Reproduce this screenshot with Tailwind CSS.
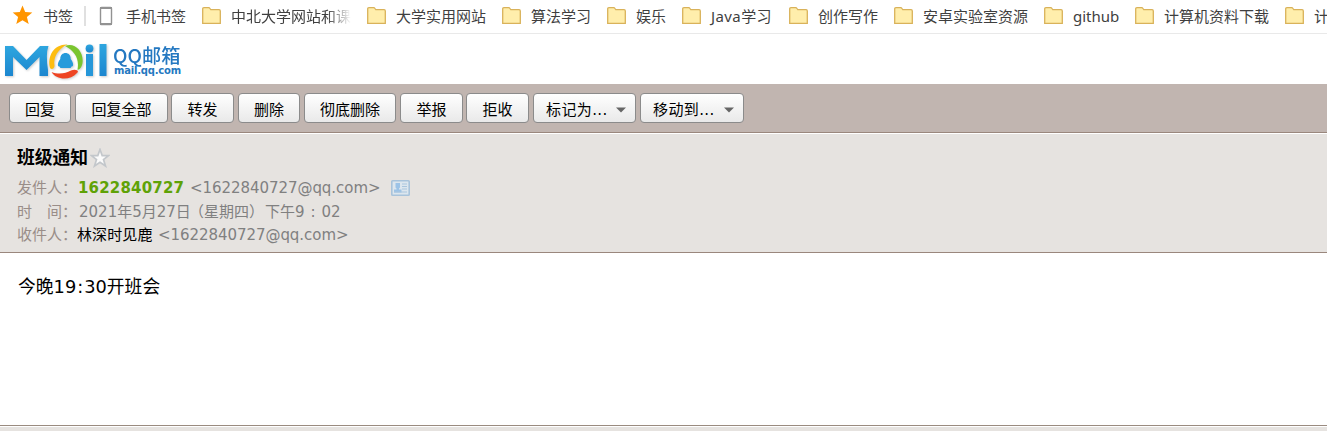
<!DOCTYPE html>
<html lang="zh-CN">
<head>
<meta charset="utf-8">
<title>QQ邮箱</title>
<script src="https://cdn.jsdelivr.net/npm/@tailwindcss/browser@4"></script>
</head>
<body class="w-[1327px] h-[431px] overflow-hidden bg-white flex flex-col font-['DejaVu_Sans','Noto_Sans_CJK_SC',sans-serif] text-[15px] text-black whitespace-nowrap">
<svg width="0" height="0" class="absolute">
  <defs>
    <linearGradient id="blue" x1="0" y1="0" x2="0" y2="1"><stop offset="0" stop-color="#2ea6df"/><stop offset="1" stop-color="#1c86cf"/></linearGradient>
    <symbol id="folder" viewBox="0 0 19 18"><path d="M.7 16.3V1.9Q.7.7 1.9.7H6.6Q7.5.7 8 1.5L8.8 2.7H17.1Q18.3 2.7 18.3 3.9V16.3Z" fill="#ffeeac" stroke="#d9b25a" stroke-width="1.3"/></symbol>
  </defs>
</svg>

<nav class="h-[34px] shrink-0 border-b border-[#e9e9e9] flex items-center overflow-hidden text-[#3f3f3f] font-['Noto_Sans','Noto_Sans_CJK_SC',sans-serif] leading-[30px] pb-[2px]">
  <div class="flex items-center w-[84px] shrink-0 pl-[12px] gap-[10px]">
    <svg class="w-[21px] h-[20px] shrink-0 -mt-px" viewBox="0 0 21 20"><path d="M10.500.500 13.200 7 20.300 7.500 14.900 12.100 16.700 19 10.500 15.300 4.300 19 6.100 12.100.7 7.500 7.800 7Z" fill="#ff9500"/></svg>
    <span>书签</span>
  </div>
  <div class="w-[2px] h-[20px] bg-[#e0e0e0] shrink-0"></div>
  <div class="flex items-center w-[116px] shrink-0 pl-[13px] gap-[13px]">
    <svg class="w-[14px] h-[20px] shrink-0 mt-px" viewBox="0 0 14 20"><rect x="1.500" y="1.500" width="11" height="17" rx="1" fill="#fff" stroke="#929292" stroke-width="1.400"/><path d="M1 2H13M1 18H13" stroke="#929292" stroke-width="2"/></svg>
    <span>手机书签</span>
  </div>
  <div class="flex items-center gap-[10px] w-[165px] shrink-0"><svg class="w-[19px] h-[18px] shrink-0"><use href="#folder"/></svg><span class="w-[120px] overflow-hidden [mask-image:linear-gradient(to_right,black_80%,transparent)]">中北大学网站和课</span></div>
  <div class="flex items-center gap-[10px] w-[135px] shrink-0"><svg class="w-[19px] h-[18px] shrink-0"><use href="#folder"/></svg><span>大学实用网站</span></div>
  <div class="flex items-center gap-[10px] w-[105px] shrink-0"><svg class="w-[19px] h-[18px] shrink-0"><use href="#folder"/></svg><span>算法学习</span></div>
  <div class="flex items-center gap-[10px] w-[75px] shrink-0"><svg class="w-[19px] h-[18px] shrink-0"><use href="#folder"/></svg><span>娱乐</span></div>
  <div class="flex items-center gap-[10px] w-[107px] shrink-0"><svg class="w-[19px] h-[18px] shrink-0"><use href="#folder"/></svg><span class="tracking-[0.4px]">Java学习</span></div>
  <div class="flex items-center gap-[10px] w-[105px] shrink-0"><svg class="w-[19px] h-[18px] shrink-0"><use href="#folder"/></svg><span>创作写作</span></div>
  <div class="flex items-center gap-[10px] w-[150px] shrink-0"><svg class="w-[19px] h-[18px] shrink-0"><use href="#folder"/></svg><span>安卓实验室资源</span></div>
  <div class="flex items-center gap-[10px] w-[91px] shrink-0"><svg class="w-[19px] h-[18px] shrink-0"><use href="#folder"/></svg><span>github</span></div>
  <div class="flex items-center gap-[10px] w-[150px] shrink-0"><svg class="w-[19px] h-[18px] shrink-0"><use href="#folder"/></svg><span>计算机资料下载</span></div>
  <div class="flex items-center gap-[10px] shrink-0"><svg class="w-[19px] h-[18px] shrink-0"><use href="#folder"/></svg><span>计</span></div>
</nav>

<header class="h-[50px] shrink-0 flex pl-[4px]">
  <svg class="w-[105px] h-[50px] shrink-0 drop-shadow-[1px_1px_1px_#0003]" viewBox="4 34 105 50">
    <path d="M5 76V46H13L26.500 60 40 46H48.500Q45.500 54 48 70V76H39.500V57L26.500 70 13 57V76Z" fill="url(#blue)"/>
    <path d="M50 68C47 56 54 44 67.500 44.500C58 49 53 57 54.500 66C54 69 51.500 70 50 68Z" fill="#fdbd10"/>
    <path d="M65 46C75 42 84 52 82.500 63C82 67 79 70.500 77.500 69.500C79.500 59 75 51 65 46Z" fill="#7ac52f"/>
    <path d="M51.500 72C58 74.500 65 74 71 70.500C75 68.500 80 70.500 77 73C70 81 56 80 51.500 72Z" fill="#ee4523"/>
    <path d="M60.300 59C60 51 71 51 70.700 59C73.500 62 74 67 71.500 66.500L70.500 68H60.500L59.500 66.500C57 67 57.500 62 60.300 59Z" fill="#269bdb"/>
    <circle cx="89.500" cy="48.500" r="3.900" fill="url(#blue)"/><path d="M86 54H93V76H86Z" fill="#2697d9"/>
    <path d="M99.500 44H106.500V76H99.500Z" fill="url(#blue)"/>
  </svg>
  <div class="ml-[4px] pt-[9px] text-[#2478c1] flex flex-col">
    <span class="text-[19px] leading-[24px] font-['Noto_Sans_CJK_SC',sans-serif] font-medium origin-left scale-x-[1.01]">QQ邮箱</span>
    <span class="text-[10px] leading-[8px] tracking-[-0.2px] font-bold ml-px">mail.qq.com</span>
  </div>
</header>

<div class="h-[49px] shrink-0 bg-[#c1b5b0] border-b border-[#9a877d] flex pt-[9px] pl-[9px] leading-[28px] text-[15px]">
  <button class="w-[62px] mr-[4px] h-[30px] border border-[#8b8b8b] rounded-[4px] bg-linear-to-b from-white to-[#e9e9e9] flex items-center justify-center pt-[3px]">回复</button>
  <button class="w-[93px] mr-[3px] h-[30px] border border-[#8b8b8b] rounded-[4px] bg-linear-to-b from-white to-[#e9e9e9] flex items-center justify-center pt-[3px]">回复全部</button>
  <button class="w-[63px] mr-[4px] h-[30px] border border-[#8b8b8b] rounded-[4px] bg-linear-to-b from-white to-[#e9e9e9] flex items-center justify-center pt-[3px]">转发</button>
  <button class="w-[62px] mr-[4px] h-[30px] border border-[#8b8b8b] rounded-[4px] bg-linear-to-b from-white to-[#e9e9e9] flex items-center justify-center pt-[3px]">删除</button>
  <button class="w-[92px] mr-[4px] h-[30px] border border-[#8b8b8b] rounded-[4px] bg-linear-to-b from-white to-[#e9e9e9] flex items-center justify-center pt-[3px]">彻底删除</button>
  <button class="w-[63px] mr-[3px] h-[30px] border border-[#8b8b8b] rounded-[4px] bg-linear-to-b from-white to-[#e9e9e9] flex items-center justify-center pt-[3px]">举报</button>
  <button class="w-[63px] mr-[4px] h-[30px] border border-[#8b8b8b] rounded-[4px] bg-linear-to-b from-white to-[#e9e9e9] flex items-center justify-center pt-[3px]">拒收</button>
  <button class="w-[103px] mr-[4px] h-[30px] border border-[#8b8b8b] rounded-[4px] bg-linear-to-b from-white to-[#e9e9e9] flex items-center justify-between pt-[3px] pl-[12px] pr-[9px]"><span class="tracking-[0.4px]">标记为...</span><svg class="w-[10px] h-[6px]" viewBox="0 0 10 6"><path d="M0 .5H10L5 5.500Z" fill="#666"/></svg></button>
  <button class="w-[104px] h-[30px] border border-[#8b8b8b] rounded-[4px] bg-linear-to-b from-white to-[#e9e9e9] flex items-center justify-between pt-[3px] pl-[12px] pr-[9px]"><span class="tracking-[0.4px]">移动到...</span><svg class="w-[10px] h-[6px]" viewBox="0 0 10 6"><path d="M0 .5H10L5 5.500Z" fill="#666"/></svg></button>
</div>

<section class="h-[120px] shrink-0 bg-[#e6e3e0] border-t border-t-white border-b border-b-[#9a877d] pl-[17px] pt-[12px] text-[#808080] flex flex-col">
  <div class="flex items-center h-[24px] mb-[6px] text-black">
    <h1 class="text-[17.800px] leading-[24px] font-bold">班级通知</h1>
    <svg class="w-[20px] h-[20px] ml-[2px] -mt-px" viewBox="0 0 20 20"><path d="M10 1.500 12.200 7.600H18.500L13.500 11.500 15.500 18 10 14.200 4.500 18 6.500 11.500 1.500 7.600H7.800Z" fill="#fbfbfb" stroke="#c3c7cb" stroke-width="1.700"/></svg>
  </div>
  <div class="flex items-center h-[24px] leading-[24px]">
    <span class="w-[61px] text-[#998d88]">发件人：</span>
    <span class="w-[112px] font-bold text-[#5fa207] tracking-[0.18px]">1622840727</span>
    <span class="w-[201px] tracking-[-0.05px]">&lt;1622840727@qq.com&gt;</span>
    <svg class="w-[19px] h-[16px]" viewBox="0 0 19 16"><rect x=".8" y=".8" width="17.400" height="14.400" rx=".8" fill="#dce6ee" stroke="#a8c3db" stroke-width="1.600"/><path d="M4.500 3H9V7.500L8 8.500V9.500H10.500V12.500H3V9.500H5.500V8.500L4.500 7.500Z" fill="#9cc3e7"/><path d="M11 4H16M11 6.500H16M11 9H16M3 12H16" stroke="#a9c5dd" stroke-width="1.200"/></svg>
  </div>
  <div class="flex items-center h-[23px] leading-[23px] pt-px">
    <span class="w-[62px] text-[#998d88]">时　间：</span>
    <span class="w-[118px]">2021年5月27日</span><span class="w-[68px] -ml-[8px]">（星期四）</span><span class="ml-[8px]">下午9</span><span class="w-[17px] text-center">:</span><span>02</span>
  </div>
  <div class="flex items-center h-[24px] leading-[24px]">
    <span class="w-[60px] text-[#998d88]">收件人：</span>
    <span class="w-[81px] text-black tracking-[0.1px]">林深时见鹿</span>
    <span class="tracking-[-0.05px]">&lt;1622840727@qq.com&gt;</span>
  </div>
</section>

<main class="h-[172px] shrink-0 pl-[18px] pt-[21px] text-[17.800px] leading-[26px]">今晚19<span class="inline-block w-[8px] text-center">:</span>30开班会</main>
<footer class="h-[6px] shrink-0 bg-[#e6e3e0] border-t border-[#9a8b80]"><div class="h-px bg-white"></div></footer>
</body>
</html>
